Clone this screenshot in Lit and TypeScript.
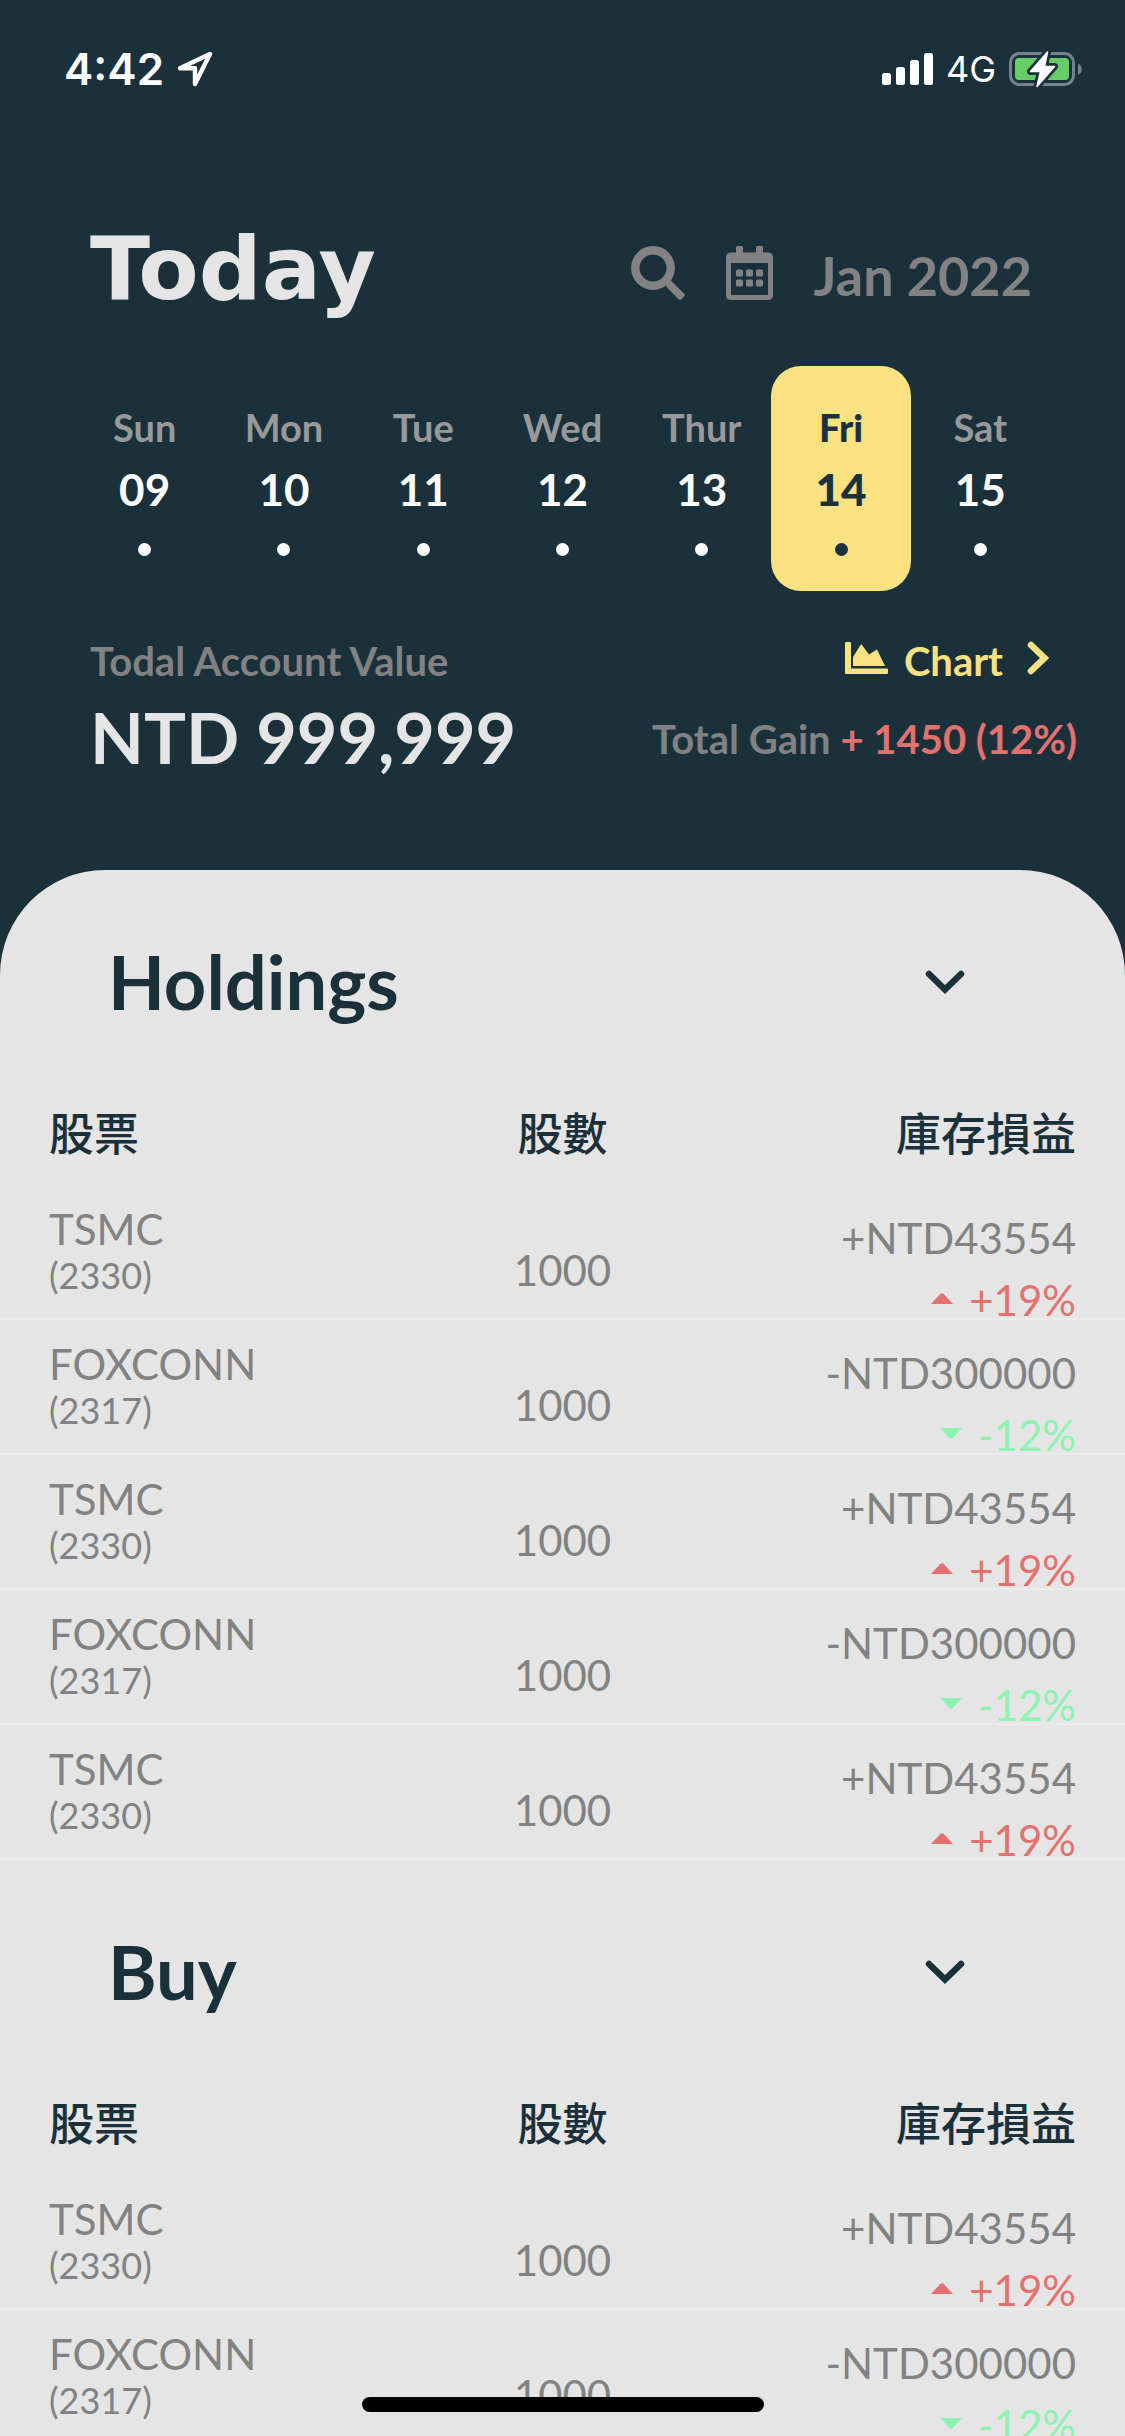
import { LitElement, html, css, svg } from "lit";
import { customElement, property, state } from "lit/decorators.js";
import { classMap } from "lit/directives/class-map.js";

interface Day {
  name: string;
  date: string;
}

interface Position {
  name: string;
  code: string;
  shares: string;
  amount: string;
  percent: string;
  up: boolean;
}

const DAYS: Day[] = [
  { name: "Sun", date: "09" },
  { name: "Mon", date: "10" },
  { name: "Tue", date: "11" },
  { name: "Wed", date: "12" },
  { name: "Thur", date: "13" },
  { name: "Fri", date: "14" },
  { name: "Sat", date: "15" },
];

const TSMC: Position = {
  name: "TSMC",
  code: "(2330)",
  shares: "1000",
  amount: "+NTD43554",
  percent: "+19%",
  up: true,
};

const FOXCONN: Position = {
  name: "FOXCONN",
  code: "(2317)",
  shares: "1000",
  amount: "-NTD300000",
  percent: "-12%",
  up: false,
};

const HOLDINGS: Position[] = [TSMC, FOXCONN, TSMC, FOXCONN, TSMC];
const BUYS: Position[] = [TSMC, FOXCONN];

const locationIcon = html`<svg class="location" viewBox="0 0 36 36" aria-hidden="true">
  <path d="M33 3 L3 17.2 H18 V33 Z" fill="none" stroke="currentColor" stroke-width="4.4" stroke-linejoin="round" />
</svg>`;

const signalIcon = html`<svg class="signal" viewBox="0 0 51 32" aria-hidden="true">
  <g fill="currentColor">
    <rect x="0" y="20" width="9" height="12" rx="2.5" />
    <rect x="14" y="14" width="9" height="18" rx="2.5" />
    <rect x="28" y="7" width="9" height="25" rx="2.5" />
    <rect x="42" y="0" width="9" height="32" rx="2.5" />
  </g>
</svg>`;

const batteryIcon = html`<svg class="battery" viewBox="0 0 74 38" aria-hidden="true">
  <rect x="1.5" y="3.5" width="63" height="31" rx="9" fill="none" stroke="#76848a" stroke-width="3" />
  <path d="M69 13.5 c5 2 5 9.5 0 11.5 Z" fill="#76848a" />
  <rect x="6" y="8" width="54" height="22" rx="4" fill="#67ce67" />
  <path d="M38.5 2 L21.5 21.5 H31.5 L28 36.500 L45.500 16.5 H35.5 Z" fill="#1a313b" stroke="#1a313b" stroke-width="7" stroke-linejoin="round" />
  <path d="M38.5 2 L21.5 21.5 H31.5 L28 36.500 L45.500 16.5 H35.5 Z" fill="#fff" stroke="#fff" stroke-width="1.5" stroke-linejoin="round" />
</svg>`;

const searchIcon = html`<svg class="search" viewBox="0 0 54 54" aria-hidden="true">
  <circle cx="22" cy="22" r="17.7" fill="none" stroke="currentColor" stroke-width="8.4" />
  <path d="M40 34.8 L53 47.6 q1.5 1.5 0 3 L50.5 53.200 q-1.5 1.5 -3 0 L35.600 41 L35 37 L37 35 Z" fill="currentColor" />
</svg>`;

const calendarIcon = html`<svg class="calendar" viewBox="0 0 47 54" aria-hidden="true">
  <g fill="currentColor">
    <path fill-rule="evenodd" d="M10 1.5 Q10 0 11.5 0 H15.5 Q17 0 17 1.5 V6.5 H30 V1.5 Q30 0 31.5 0 H35.5 Q37 0 37 1.5 V6.5 H42 Q47 6.5 47 11.5 V49 Q47 54 42 54 H5 Q0 54 0 49 V11.5 Q0 6.5 5 6.5 H10 Z M5 17 V48 Q5 49 6 49 H41 Q42 49 42 48 V17 Z" />
    <rect x="10" y="23.5" width="7" height="7" rx="1.5" />
    <rect x="20" y="23.5" width="7" height="7" rx="1.5" />
    <rect x="30" y="23.5" width="7" height="7" rx="1.5" />
    <rect x="10" y="33.5" width="7" height="7" rx="1.5" />
    <rect x="20" y="33.5" width="7" height="7" rx="1.5" />
    <rect x="30" y="33.5" width="7" height="7" rx="1.5" />
  </g>
</svg>`;

const chartIcon = html`<svg class="chart-icon" viewBox="0 0 43 32" aria-hidden="true">
  <g fill="currentColor">
    <path d="M0 1 Q0 0 1 0 H5 Q6 0 6 1 V26.5 H42 Q43 26.5 43 27.5 V31 Q43 32 42 32 H1 Q0 32 0 31 Z" />
    <path d="M8 24 V15 L15.5 3 Q16.2 2.2 17 3 L24 12.5 L31 8 Q32 7.5 32.5 8.5 L40 24 Z" />
  </g>
</svg>`;

const rightIcon = html`<svg class="right-icon" viewBox="0 0 22 34" aria-hidden="true">
  <path d="M4 4 L17.5 17 L4 30" fill="none" stroke="currentColor" stroke-width="6.5" stroke-linecap="round" />
</svg>`;

const downIcon = html`<svg class="down-icon" viewBox="0 0 40 25" aria-hidden="true">
  <path d="M4 4 L20 19.5 L36 4" fill="none" stroke="currentColor" stroke-width="6.5" stroke-linecap="round" />
</svg>`;

const triangle = (up: boolean) => html`<svg class="triangle" viewBox="0 0 22 11" aria-hidden="true">
  ${up
    ? svg`<path d="M0 11 L9.5 0.8 Q11 -0.5 12.5 0.8 L22 11 Z" fill="currentColor" />`
    : svg`<path d="M0 0 H22 L12.5 10.2 Q11 11.5 9.5 10.2 Z" fill="currentColor" />`}
</svg>`;

@customElement("position-section")
export class PositionSection extends LitElement {
  static styles = css`
    :host {
      display: block;
      font-family: Lato, "Noto Sans CJK TC", sans-serif;
    }
    .heading {
      margin: 0;
      padding: 68px 0 64px;
      font-size: 74px;
      line-height: 88px;
      font-weight: 700;
    }
    .toggle {
      display: flex;
      align-items: center;
      justify-content: space-between;
      width: 100%;
      padding: 0 160px 0 108px;
      border: 0;
      background: none;
      font: inherit;
      color: #1a313b;
      cursor: pointer;
    }
    .down-icon {
      width: 40px;
      height: 25px;
    }
    .closed .down-icon {
      rotate: 180deg;
    }
    .table {
      width: 100%;
      border-spacing: 0;
      table-layout: fixed;
      color: #828282;
      font-size: 42px;
      line-height: 36px;
    }
    .column {
      padding: 20px 49px 31px;
      font-size: 45px;
      line-height: 44px;
      font-weight: 500;
      font-family: "Noto Sans CJK TC", sans-serif;
      color: #1a313b;
      text-align: center;
    }
    .column:first-child {
      text-align: left;
    }
    .column:last-child {
      text-align: right;
    }
    .cell {
      padding: 0 49px;
      border-bottom: 2px solid #ebebeb;
      vertical-align: top;
      font-weight: 400;
    }
    .stock {
      padding-top: 20px;
      text-align: left;
      line-height: 48px;
    }
    .code {
      display: block;
      font-size: 36px;
      line-height: 44px;
    }
    .shares {
      padding-top: 67px;
      text-align: center;
    }
    .profit {
      padding-top: 35px;
      text-align: right;
    }
    .change {
      display: flex;
      align-items: center;
      justify-content: flex-end;
      gap: 16px;
      margin-top: 26px;
      color: #e4716e;
    }
    .change.loss {
      color: #8ef2b0;
    }
    .triangle {
      width: 22px;
      height: 11px;
      margin-bottom: 4px;
    }
  `;

  @property() label = "";
  @property({ attribute: false }) positions: Position[] = [];
  @state() private open = true;

  private toggle() {
    this.open = !this.open;
  }

  render() {
    return html`
      <section>
        <h2 class=${classMap({ heading: true, closed: !this.open })}>
          <button class="toggle" type="button" aria-expanded=${this.open ? "true" : "false"} @click=${this.toggle}>
            <span>${this.label}</span>${downIcon}
          </button>
        </h2>
        ${this.open
          ? html`<table class="table">
              <thead>
                <tr>
                  <th class="column" scope="col">股票</th>
                  <th class="column" scope="col">股數</th>
                  <th class="column" scope="col">庫存損益</th>
                </tr>
              </thead>
              <tbody>
                ${this.positions.map(
                  (p) => html`<tr>
                    <th class="cell stock" scope="row">${p.name}<span class="code">${p.code}</span></th>
                    <td class="cell shares">${p.shares}</td>
                    <td class="cell profit">
                      ${p.amount}
                      <div class=${classMap({ change: true, loss: !p.up })}>
                        ${triangle(p.up)}<span>${p.percent}</span>
                      </div>
                    </td>
                  </tr>`
                )}
              </tbody>
            </table>`
          : null}
      </section>
    `;
  }
}

@customElement("app-root")
export class AppRoot extends LitElement {
  static styles = css`
    :host {
      display: flex;
      flex-direction: column;
      height: 100vh;
      overflow: hidden;
      background: #1a313b;
      font-family: Lato, "Noto Sans CJK TC", sans-serif;
      font-weight: 700;
    }
    .status {
      display: flex;
      align-items: center;
      justify-content: space-between;
      height: 138px;
      padding: 0 42px 0 64px;
      font-family: Inter, sans-serif;
      color: #fff;
    }
    .status-group {
      display: flex;
      align-items: center;
      gap: 13px;
    }
    .time {
      font-size: 44px;
      font-weight: 600;
    }
    .network {
      font-size: 36px;
      font-weight: 400;
    }
    .location {
      width: 36px;
      height: 36px;
    }
    .signal {
      width: 51px;
      height: 32px;
    }
    .battery {
      width: 74px;
      height: 38px;
    }
    .top {
      display: flex;
      align-items: flex-start;
      justify-content: space-between;
      padding: 108px 93px 0 90px;
    }
    .title {
      margin: 0;
      font-family: "DejaVu Sans", sans-serif;
      font-size: 88px;
      line-height: 46px;
      font-weight: 700;
      color: #e5e5e5;
    }
    .tools {
      display: flex;
      align-items: flex-start;
      gap: 41px;
      font-size: 54px;
      line-height: 60px;
      color: #828282;
    }
    .tool {
      display: flex;
      padding: 0;
      border: 0;
      background: none;
      color: inherit;
      font: inherit;
      cursor: pointer;
    }
    .search {
      width: 54px;
      height: 54px;
    }
    .calendar {
      width: 47px;
      height: 54px;
    }
    .days {
      display: grid;
      grid-template-columns: repeat(7, 1fr);
      padding: 60px 75px 0;
    }
    .day {
      display: flex;
      flex-direction: column;
      align-items: center;
      gap: 12px;
      padding: 36px 0 35px;
      border: 0;
      border-radius: 30px;
      background: none;
      font: inherit;
      line-height: 50px;
      color: #fff;
      cursor: pointer;
    }
    .day-name {
      font-size: 38px;
      color: #999;
    }
    .day-date {
      font-size: 44px;
    }
    .dot {
      width: 13px;
      height: 13px;
      margin-top: 17px;
      border-radius: 50%;
      background: currentColor;
    }
    .day.selected {
      background: #fae182;
      color: #1a313b;
      font-weight: 900;
    }
    .selected .day-name {
      color: inherit;
    }
    .account {
      display: flex;
      justify-content: space-between;
      padding: 46px 48px 91px 90px;
      font-size: 40px;
      line-height: 48px;
      color: #828282;
    }
    .value {
      display: flex;
      flex-direction: column;
      gap: 10px;
    }
    .total {
      font-size: 70px;
      line-height: 84px;
      color: #e5e5e5;
    }
    .summary {
      display: flex;
      flex-direction: column;
      align-items: flex-end;
      gap: 30px;
    }
    .chart {
      display: flex;
      align-items: center;
      gap: 16px;
      margin-right: 28px;
      color: #fae182;
      text-decoration: none;
    }
    .chart-icon {
      width: 43px;
      height: 32px;
      margin-bottom: 6px;
    }
    .right-icon {
      width: 22px;
      height: 34px;
      margin: 0 0 6px 8px;
    }
    .gain {
      color: #e4716e;
    }
    .panel {
      flex: 1;
      min-height: 0;
      overflow-y: auto;
      scrollbar-width: none;
      border-radius: 105px 105px 0 0;
      background: #e5e5e5;
    }
    .home {
      position: fixed;
      bottom: 24px;
      left: 50%;
      width: 402px;
      height: 15px;
      translate: -50% 0;
      border-radius: 8px;
      background: #000;
    }
  `;

  @state() private selected = "14";

  render() {
    return html`
      <div class="status">
        <div class="status-group"><span class="time">4:42</span>${locationIcon}</div>
        <div class="status-group">${signalIcon}<span class="network">4G</span>${batteryIcon}</div>
      </div>
      <header>
        <div class="top">
          <h1 class="title">Today</h1>
          <div class="tools">
            <button class="tool" type="button" aria-label="Search">${searchIcon}</button>
            <button class="tool" type="button" aria-label="Calendar">${calendarIcon}</button>
            <span>Jan 2022</span>
          </div>
        </div>
        <nav class="days">
          ${DAYS.map(
            (d) => html`<button
              type="button"
              class=${classMap({ day: true, selected: d.date === this.selected })}
              aria-pressed=${d.date === this.selected ? "true" : "false"}
              @click=${() => (this.selected = d.date)}
            >
              <span class="day-name">${d.name}</span>
              <span class="day-date">${d.date}</span>
              <span class="dot"></span>
            </button>`
          )}
        </nav>
        <div class="account">
          <div class="value">
            <span>Todal Account Value</span>
            <span class="total">NTD 999,999</span>
          </div>
          <div class="summary">
            <a class="chart" href="#chart">${chartIcon}<span>Chart</span>${rightIcon}</a>
            <span>Total Gain <span class="gain">+ 1450 (12%)</span></span>
          </div>
        </div>
      </header>
      <main class="panel">
        <position-section label="Holdings" .positions=${HOLDINGS}></position-section>
        <position-section label="Buy" .positions=${BUYS}></position-section>
      </main>
      <div class="home"></div>
    `;
  }
}
